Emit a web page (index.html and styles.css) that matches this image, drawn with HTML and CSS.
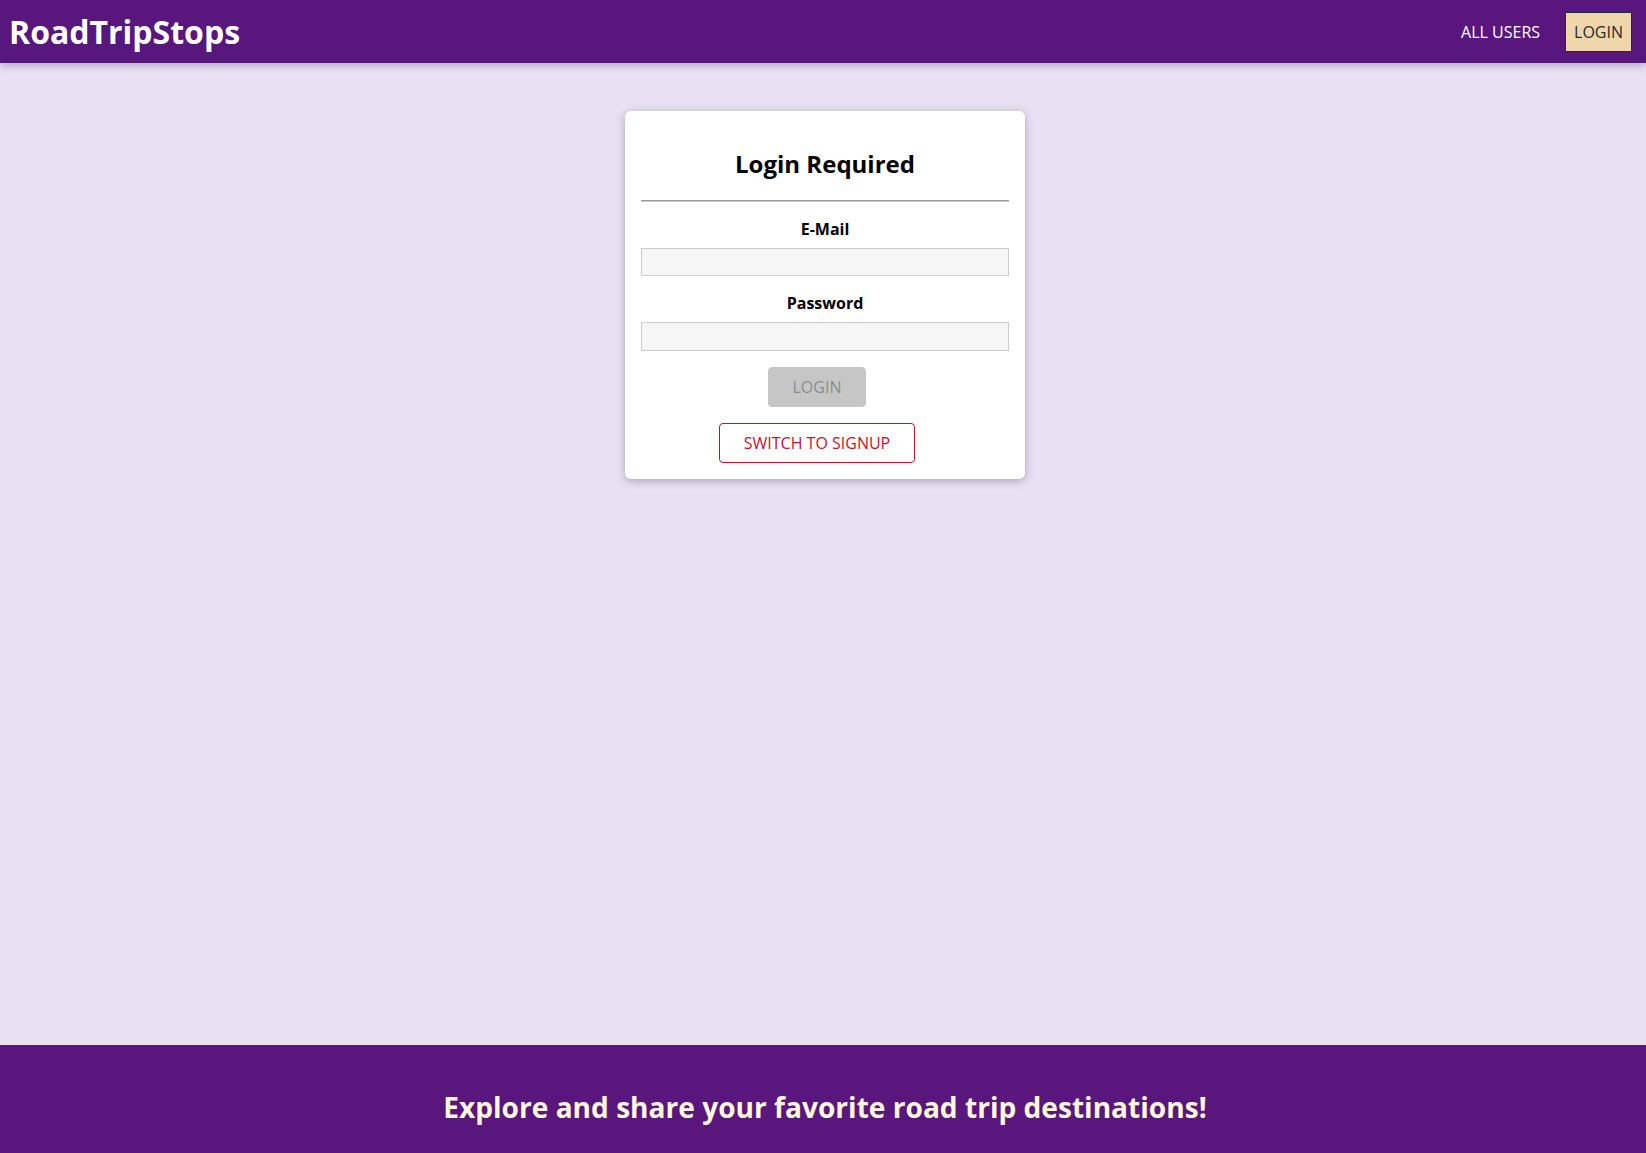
FILE: index.html
```
<!DOCTYPE html>
<html lang="en">
<head>
<meta charset="utf-8">
<title>RoadTripStops</title>
<link rel="stylesheet" href="styles.css">
</head>
<body>
<header class="main-header">
  <h1 class="logo">RoadTripStops</h1>
  <nav>
    <ul class="nav-links">
      <li><a href="#" class="nav-link">ALL USERS</a></li>
      <li><a href="#" class="nav-link active">LOGIN</a></li>
    </ul>
  </nav>
</header>
<main class="main">
  <div class="card authentication">
    <h2 class="auth-title">Login Required</h2>
    <hr class="divider">
    <form class="auth-form">
      <div class="form-control">
        <label for="email">E-Mail</label>
        <input id="email" type="email">
      </div>
      <div class="form-control">
        <label for="password">Password</label>
        <input id="password" type="password">
      </div>
      <button type="button" class="button" disabled>LOGIN</button>
    </form>
    <button type="button" class="button button--inverse">SWITCH TO SIGNUP</button>
  </div>
</main>
<footer class="main-footer">
  <p class="footer-text">Explore and share your favorite road trip destinations!</p>
</footer>
</body>
</html>
```
FILE: styles.css
```
* { box-sizing: border-box; }
html, body { margin: 0; padding: 0; }
body {
  font-family: "Open Sans", "Liberation Sans", sans-serif;
  background: #e8dff3;
  min-height: 100vh;
  display: flex;
  flex-direction: column;
}
.main-header {
  height: 63px;
  background: #59177d;
  display: flex;
  align-items: center;
  justify-content: space-between;
  padding: 0 6px 0 9px;
  box-shadow: 0 2px 8px rgba(0,0,0,0.26);
  position: relative;
  z-index: 2;
}
.logo {
  margin: 0;
  color: #fff;
  font-size: 32px;
  font-weight: 700;
}
.nav-links {
  list-style: none;
  margin: 0;
  padding: 0;
  display: flex;
  align-items: center;
}
.nav-links li { margin: 0 8px; }
.nav-link {
  display: block;
  border: 1px solid transparent;
  color: #fff;
  text-decoration: none;
  padding: 8px;
  font-size: 16px;
}
.nav-link.active {
  background: #f0d6ab;
  border-color: #292929;
  color: #292929;
}
.main {
  flex: 1;
  padding-left: 4px;
}
.card {
  background: #fff;
  border-radius: 6px;
  box-shadow: 0 2px 8px rgba(0,0,0,0.26);
  padding: 16px;
}
.authentication {
  width: 400px;
  margin: 48px auto;
  text-align: center;
}
.auth-title {
  font-size: 24px;
  margin: 20px 0;
  font-weight: 700;
}
.divider {
  margin: 8px 0;
  border: none;
  border-top: 1px solid #9a9a9a;
  border-bottom: 1px solid #c8c8c8;
  height: 0;
}
.auth-form { margin-bottom: 16px; }
.form-control { margin: 16px 0; }
.form-control label {
  display: block;
  font-weight: 700;
  margin-bottom: 8px;
  font-size: 16px;
}
.form-control input {
  display: block;
  width: 100%;
  height: 28.4px;
  font: inherit;
  border: 1px solid #ccc;
  background: #f6f6f6;
  padding: 2px 4px;
}
.button {
  font: inherit;
  font-size: 16px;
  padding: 8px 24px;
  border: 1px solid #c8102e;
  border-radius: 4px;
  background: #c8102e;
  color: #fff;
  margin-right: 16px;
  display: inline-block;
}
.button:disabled {
  background: #c6c6c6;
  border-color: #c6c6c6;
  color: #8c8c8c;
}
.button--inverse {
  background: transparent;
  color: #c8102e;
}
.main-footer {
  height: 108px;
  background: #59177d;
  padding: 43px 0 0 4px;
  text-align: center;
}
.footer-text {
  margin: 0;
  color: #fff8dc;
  font-size: 28.1px;
  font-weight: 700;
}
```
